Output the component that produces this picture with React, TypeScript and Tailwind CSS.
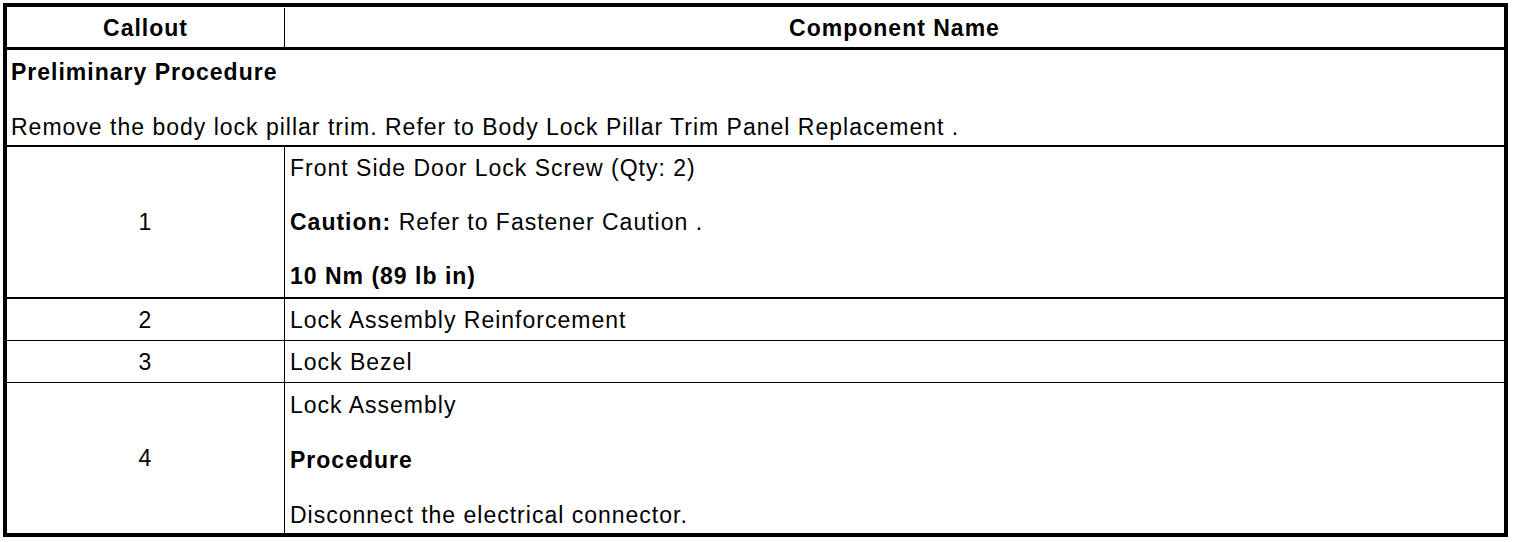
export default function App() {
    const font = { fontFamily: '"Liberation Sans", Arial, sans-serif' };
    return (
        <div className="bg-white w-[1520px] h-[542px] pt-[3px] pl-[3px]" style={font}>
            <div className="w-[1505px] h-[534px] border-4 border-black flex flex-col text-[23px] leading-[24px] tracking-[1px] text-black">
                <div className="h-[43px] flex border-b-[3px] border-black font-bold pt-[1px]">
                    <div className="w-[278px] border-r border-black flex items-center justify-center">Callout</div>
                    <div className="flex-1 flex items-center justify-center">Component Name</div>
                </div>
                <div className="h-[97px] border-b-2 border-black pl-[4px] pt-[10px] flex flex-col gap-[31px]">
                    <p className="font-bold">Preliminary Procedure</p>
                    <p>Remove the body lock pillar trim. Refer to Body Lock Pillar Trim Panel Replacement .</p>
                </div>
                <div className="h-[152px] flex border-b-2 border-black">
                    <div className="w-[278px] border-r border-black flex items-center justify-center">1</div>
                    <div className="flex-1 pl-[5px] pt-[9px] flex flex-col gap-[30px]">
                        <p>Front Side Door Lock Screw (Qty: 2)</p>
                        <p><span className="font-bold">Caution:</span> Refer to Fastener Caution .</p>
                        <p className="font-bold">10 Nm (89 lb in)</p>
                    </div>
                </div>
                <div className="h-[42px] flex border-b border-black">
                    <div className="w-[278px] border-r border-black flex items-center justify-center">2</div>
                    <div className="flex-1 pl-[5px] flex items-center">Lock Assembly Reinforcement</div>
                </div>
                <div className="h-[42px] flex border-b border-black">
                    <div className="w-[278px] border-r border-black flex items-center justify-center">3</div>
                    <div className="flex-1 pl-[5px] flex items-center">Lock Bezel</div>
                </div>
                <div className="flex-1 flex">
                    <div className="w-[278px] border-r border-black flex items-center justify-center">4</div>
                    <div className="flex-1 pl-[5px] pt-[10px] flex flex-col gap-[31px]">
                        <p>Lock Assembly</p>
                        <p className="font-bold">Procedure</p>
                        <p>Disconnect the electrical connector.</p>
                    </div>
                </div>
            </div>
        </div>
    );
}
